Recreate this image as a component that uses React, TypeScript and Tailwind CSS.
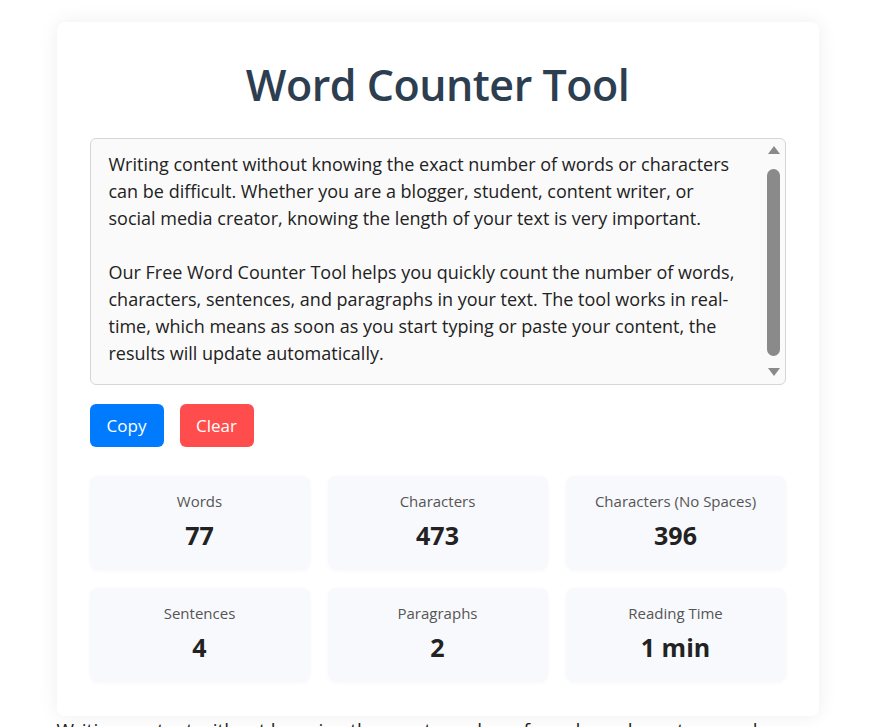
import { useState } from 'react'

// Word counter page: title, text box, two actions and a grid of stats

const initialText =
  'Writing content without knowing the exact number of words or characters can be difficult. Whether you are a blogger, student, content writer, or social media creator, knowing the length of your text is very important.\n\nOur Free Word Counter Tool helps you quickly count the number of words, characters, sentences, and paragraphs in your text. The tool works in real-time, which means as soon as you start typing or paste your content, the results will update automatically.'

function countStats(text: string) {
  const trimmed = text.trim()
  const words = trimmed ? trimmed.split(/\s+/).length : 0
  const sentences = trimmed ? (trimmed.match(/[.!?]+/g) || []).length : 0
  const paragraphs = trimmed ? trimmed.split(/\n\s*\n/).filter((p) => p.trim()).length : 0
  const minutes = Math.max(1, Math.ceil(words / 200))
  return [
    { label: 'Words', value: String(words) },
    { label: 'Characters', value: String(text.length) },
    { label: 'Characters (No Spaces)', value: String(text.replace(/\s/g, '').length) },
    { label: 'Sentences', value: String(sentences) },
    { label: 'Paragraphs', value: String(paragraphs) },
    { label: 'Reading Time', value: words ? `${minutes} min` : '0 min' },
  ]
}

function StatCard({ label, value }: { label: string; value: string }) {
  return (
    <div className="flex h-[94px] flex-col items-center rounded-lg bg-[#f8f9fc] pt-[14px] shadow-[0_1px_4px_rgba(0,0,0,0.03)]">
      <div className="text-[15px] leading-[22px] text-[#555]">{label}</div>
      <div className="mt-[6px] text-[25px] font-bold leading-[34px] text-[#222]">{value}</div>
    </div>
  )
}

export default function App() {
  const [text, setText] = useState(initialText)
  const stats = countStats(text)

  return (
    <div className="min-h-screen bg-white font-['Open_Sans','Noto_Sans',sans-serif] text-[#222]">
      <div className="mx-auto mt-[22px] w-[762px] rounded-lg bg-white px-[33px] pb-[34px] pt-[31px] shadow-[0_0_20px_rgba(0,0,0,0.07)]">
        <h1 className="text-center text-[43px] font-semibold leading-[64px] tracking-[-0.5px] text-[#2c3e50]">
          Word Counter Tool
        </h1>

        {/* Text box with a drawn scrollbar over its right edge */}
        <div className="relative mt-[21px]">
          <textarea
            value={text}
            onChange={(e) => setText(e.target.value)}
            className="block h-[247px] w-full resize-none overflow-hidden rounded-md border border-[#d6d6d6] bg-[#fafafa] py-[12px] pl-[18px] pr-[44px] text-[18px] leading-[27px] text-[#222] outline-none"
          />
          <div className="pointer-events-none absolute right-[5px] top-[8px] flex w-[14px] flex-col items-center">
            <div className="h-0 w-0 border-x-[6px] border-b-[8px] border-x-transparent border-b-[#8a8a8a]" />
            <div className="mt-[15px] h-[187px] w-[13px] rounded-full bg-[#8a8a8a]" />
            <div className="mt-[12px] h-0 w-0 border-x-[6px] border-t-[8px] border-x-transparent border-t-[#8a8a8a]" />
          </div>
        </div>

        <div className="mt-[19px] flex gap-4">
          <button
            onClick={() => navigator.clipboard?.writeText(text)}
            className="h-[43px] w-[74px] rounded-md bg-[#007bff] text-[17px] text-white"
          >
            Copy
          </button>
          <button
            onClick={() => setText('')}
            className="h-[43px] w-[74px] rounded-md bg-[#ff4d4d] text-[17px] text-white"
          >
            Clear
          </button>
        </div>

        <div className="mt-[29px] grid grid-cols-3 gap-[18px]">
          {stats.map((s) => (
            <StatCard key={s.label} label={s.label} value={s.value} />
          ))}
        </div>
      </div>

      {/* Article text below the tool */}
      <div className="mx-auto mt-[2px] w-[762px] text-[19px] leading-[24px] text-[#222]">
        Writing content without knowing the exact number of words or characters can be difficult.
        Whether you are a blogger, student, content writer, or social media creator, knowing the
        length of your text is very important.
      </div>
    </div>
  )
}
